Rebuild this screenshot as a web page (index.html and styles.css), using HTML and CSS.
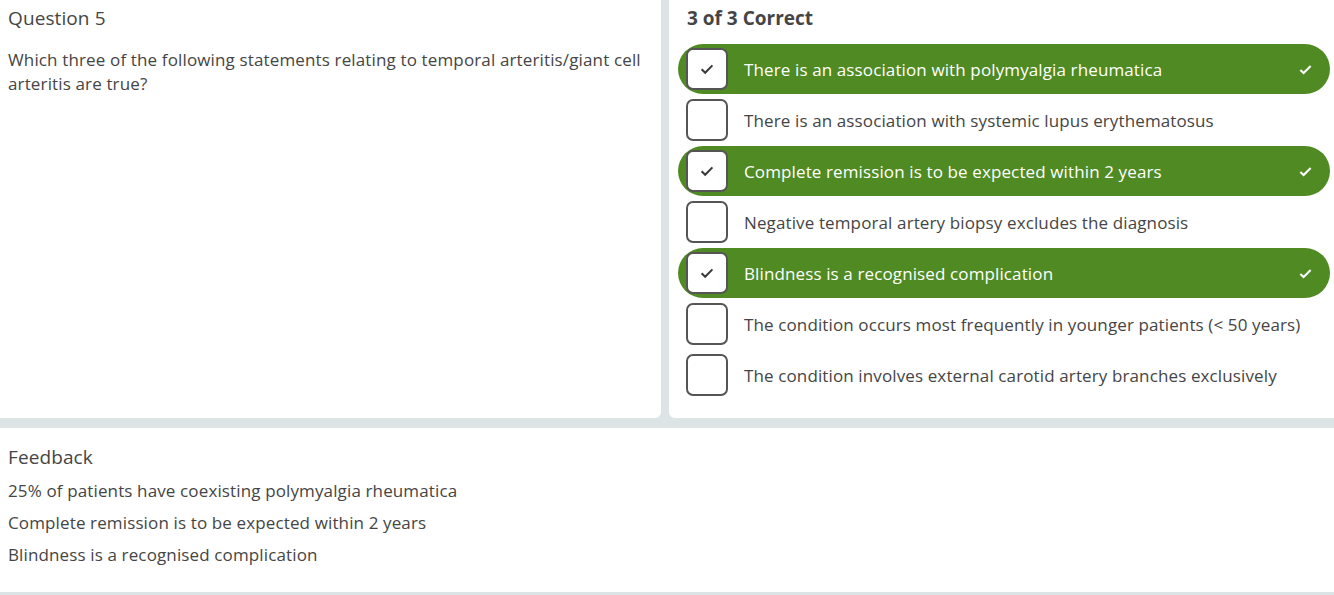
FILE: index.html
```html
<!DOCTYPE html>
<html>
<head>
<meta charset="utf-8">
<link rel="stylesheet" href="styles.css">
</head>
<body>
<div class="page">
  <div class="top">
    <section class="panel question">
      <h2 class="title">Question 5</h2>
      <p class="stem">Which three of the following statements relating to temporal arteritis/giant cell arteritis are true?</p>
    </section>
    <section class="panel answers">
      <h2 class="score">3 of 3 Correct</h2>
      <ul class="options">
        <li class="option correct"><span class="box"><svg viewBox="0 0 16 16"><path d="M3.2 8.2l3.2 3.2 6.4-6.6"/></svg></span><span class="label">There is an association with polymyalgia rheumatica</span><svg class="tick" viewBox="0 0 16 16"><path d="M2.5 8.5l3.5 3.2 7.5-7.5"/></svg></li>
        <li class="option"><span class="box"></span><span class="label">There is an association with systemic lupus erythematosus</span></li>
        <li class="option correct"><span class="box"><svg viewBox="0 0 16 16"><path d="M3.2 8.2l3.2 3.2 6.4-6.6"/></svg></span><span class="label">Complete remission is to be expected within 2 years</span><svg class="tick" viewBox="0 0 16 16"><path d="M2.5 8.5l3.5 3.2 7.5-7.5"/></svg></li>
        <li class="option"><span class="box"></span><span class="label">Negative temporal artery biopsy excludes the diagnosis</span></li>
        <li class="option correct"><span class="box"><svg viewBox="0 0 16 16"><path d="M3.2 8.2l3.2 3.2 6.4-6.6"/></svg></span><span class="label">Blindness is a recognised complication</span><svg class="tick" viewBox="0 0 16 16"><path d="M2.5 8.5l3.5 3.2 7.5-7.5"/></svg></li>
        <li class="option"><span class="box"></span><span class="label">The condition occurs most frequently in younger patients (&lt; 50 years)</span></li>
        <li class="option"><span class="box"></span><span class="label">The condition involves external carotid artery branches exclusively</span></li>
      </ul>
    </section>
  </div>
  <section class="feedback">
    <h2 class="title">Feedback</h2>
    <p class="line">25% of patients have coexisting polymyalgia rheumatica</p>
    <p class="line">Complete remission is to be expected within 2 years</p>
    <p class="line">Blindness is a recognised complication</p>
  </section>
</div>
</body>
</html>
```
FILE: styles.css
```css
* { box-sizing: border-box; }
html, body { margin: 0; padding: 0; }
body {
  background: #dce4e6;
  font-family: "Open Sans", "Noto Sans", sans-serif;
  color: #454545;
  width: 1334px;
  height: 595px;
  overflow: hidden;
}
.page { display: flex; flex-direction: column; gap: 10px; }
.top {
  display: grid;
  grid-template-columns: 661px 1fr;
  gap: 8px;
}
.panel { background: #fff; }
.question {
  padding: 6px 8px 0;
  border-radius: 0 0 6px 0;
}
.title {
  margin: 0;
  font-size: 19px;
  font-weight: 400;
  line-height: 24px;
  letter-spacing: 0.1px;
}
.stem {
  margin: 18px 0 0;
  font-size: 17px;
  line-height: 24px;
  letter-spacing: 0.14px;
}
.answers {
  padding: 6px 4px 18px 9px;
  border-radius: 0 0 0 6px;
}
.score {
  margin: 0 0 14px 9px;
  font-size: 19px;
  font-weight: 700;
  line-height: 24px;
}
.options {
  list-style: none;
  margin: 0;
  padding: 0;
  display: flex;
  flex-direction: column;
  gap: 1px;
}
.option {
  height: 50px;
  display: flex;
  align-items: center;
  padding: 0 17px 0 8px;
  border-radius: 25px;
  font-size: 17px;
  letter-spacing: 0.12px;
}
.option.correct { background: #4f8a22; color: #fff; }
.box {
  width: 42px;
  height: 42px;
  flex: none;
  border: 2px solid #555;
  border-radius: 7px;
  background: #fff;
  display: flex;
  align-items: center;
  justify-content: center;
  margin-right: 16px;
}
.box svg { width: 18px; height: 18px; fill: none; stroke: #3a3a3a; stroke-width: 1.8; }
.label { flex: 1; }
.tick { width: 15px; height: 15px; fill: none; stroke: #fff; stroke-width: 2.2; }
.feedback {
  background: #fff;
  padding: 17px 8px 25px;
  margin-bottom: 4px;
}
.line {
  margin: 8px 0 0;
  font-size: 17px;
  line-height: 24px;
  letter-spacing: 0.13px;
}
.feedback .title + .line { margin-top: 10px; }
```
